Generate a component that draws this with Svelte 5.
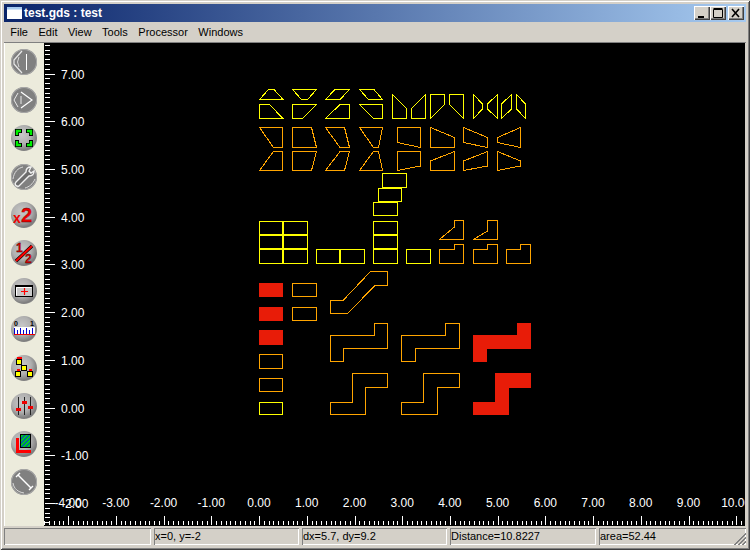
<script>
  const menus = ['File', 'Edit', 'View', 'Tools', 'Processor', 'Windows'];
  const icons = ['prev', 'next', 'fit', 'wrench', 'x2', 'half', 'box', 'ruler', 'nodes', 'sliders', 'layer', 'line'];
  const disabled = new Set(['prev', 'next', 'wrench', 'line']);

  const rect = (x1, y1, x2, y2) => `${x1},${y1} ${x2},${y1} ${x2},${y2} ${x1},${y2}`;

  const yellow = [
    '259.5,99.5 268.5,89.5 274,89.5 283,99.5',
    '259.5,104.5 269.5,104.5 283,118.5 259.5,118.5',
    '292.5,89.5 316.5,89.5 307.5,99.5 301.5,99.5',
    '292.5,104.5 316.5,104.5 302.5,118.5 292.5,118.5',
    '325.5,99.5 335,89.5 349.5,89.5 340,99.5',
    '325.5,118.5 340,104.5 349.5,104.5 349.5,118.5',
    '359.5,89.5 374,89.5 382.5,99.5 368.5,99.5',
    '359.5,104.5 382.5,104.5 382.5,118.5 373.5,118.5',
    '392.5,94.5 406.5,108.5 406.5,118.5 392.5,118.5',
    '411.5,108.5 425.5,94.5 425.5,118.5 411.5,118.5',
    '430.5,94.5 444.5,94.5 444.5,104.5 430.5,118.5',
    '449.5,94.5 463.5,94.5 463.5,118.5 449.5,104.5',
    '473.5,94.5 482.5,104 482.5,109 473.5,118.5',
    '497.5,94.5 497.5,118.5 487.5,109 487.5,104',
    '501.5,104 511.5,94.5 511.5,109 501.5,118.5',
    '516.5,94.5 525.5,104 525.5,118.5 516.5,109',
    rect(382.5, 173.5, 406.5, 187.5),
    rect(378.5, 188.5, 401.5, 201.5),
    rect(373.5, 202.5, 397.5, 215.5),
    rect(259.5, 221.5, 282.5, 234.5),
    rect(283.5, 221.5, 307.5, 234.5),
    rect(259.5, 235.5, 282.5, 248.5),
    rect(283.5, 235.5, 307.5, 248.5),
    rect(259.5, 249.5, 282.5, 263.5),
    rect(283.5, 249.5, 307.5, 263.5),
    rect(316.5, 249.5, 339.5, 263.5),
    rect(340.5, 249.5, 364.5, 263.5),
    rect(373.5, 221.5, 397.5, 234.5),
    rect(373.5, 235.5, 397.5, 248.5),
    rect(373.5, 249.5, 397.5, 263.5),
    rect(406.5, 249.5, 430.5, 263.5),
    rect(259.5, 402.5, 282.5, 414.5)
  ];

  const orange = [
    '259.5,127.5 282.5,127.5 282.5,147.5 273.5,147.5',
    '292.5,127.5 311.5,127.5 316.5,147.5 292.5,147.5',
    '325.5,127.5 344.5,127.5 349.5,147.5 340,147.5',
    '359.5,127.5 382.5,127.5 378.5,147.5 373.5,147.5',
    '397.5,127.5 420.5,127.5 420.5,147.5 397.5,142.5',
    '430.5,127.5 454.5,137.5 454.5,147.5 430.5,147.5',
    '463.5,127.5 487.5,137.5 487.5,147.5 463.5,142.5',
    '520.5,127.5 520.5,147.5 497.5,142.5 497.5,137.5',
    '259.5,170.5 273.5,151.5 282.5,151.5 282.5,170.5',
    '292.5,151.5 316.5,151.5 311.5,170.5 292.5,170.5',
    '325.5,170.5 340,151.5 349.5,151.5 344.5,170.5',
    '359.5,170.5 373.5,151.5 378.5,151.5 382.5,170.5',
    '397.5,151.5 420.5,151.5 420.5,166 397.5,170.5',
    '430.5,161 454.5,151.5 454.5,170.5 430.5,170.5',
    '463.5,161 487.5,151.5 487.5,166 463.5,170.5',
    '497.5,151.5 520.5,161 520.5,166 497.5,170.5',
    '439.5,239.5 454.5,227 454.5,220.5 463.5,220.5 463.5,239.5',
    '473.5,239.5 487.5,231 487.5,220.5 497.5,220.5 497.5,239.5',
    '439.5,249.5 454.5,249.5 454.5,244.5 463.5,244.5 463.5,263.5 439.5,263.5',
    '473.5,249.5 487.5,249.5 487.5,244.5 497.5,244.5 497.5,263.5 473.5,263.5',
    '506.5,249.5 520.5,249.5 520.5,244.5 530.5,244.5 530.5,263.5 506.5,263.5',
    rect(259.5, 354.5, 282.5, 368.5),
    rect(259.5, 378.5, 282.5, 391.5),
    rect(292.5, 283.5, 316.5, 296.5),
    rect(292.5, 307.5, 316.5, 320.5),
    '330.5,300.5 343,300.5 370.5,271.5 387.5,271.5 387.5,285.5 375,285.5 347.5,313.5 330.5,313.5',
    '330.5,335.5 374.5,335.5 374.5,323.5 387.5,323.5 387.5,348.5 343.5,348.5 343.5,361.5 330.5,361.5',
    '401.5,335.5 445.5,335.5 445.5,323.5 459.5,323.5 459.5,348.5 415.5,348.5 415.5,361.5 401.5,361.5',
    '330.5,402.5 352.5,402.5 352.5,373.5 387.5,373.5 387.5,387.5 365.5,387.5 365.5,414.5 330.5,414.5',
    '401.5,402.5 423.5,402.5 423.5,373.5 459.5,373.5 459.5,387.5 437.5,387.5 437.5,414.5 401.5,414.5'
  ];

  const red = [
    rect(259, 283, 283, 297),
    rect(259, 307, 283, 321),
    rect(259, 330, 283, 345),
    '473,335 517,335 517,323 531,323 531,349 487,349 487,362 473,362',
    '473,402 495,402 495,373 531,373 531,388 509,388 509,415 473,415'
  ];

  const X0 = 259.6, XS = 47.72, Y0 = 408.1, YS = 47.72;
  const xLabels = [-4, -3, -2, -1, 0, 1, 2, 3, 4, 5, 6, 7, 8, 9, 10];
  const yLabels = [7, 6, 5, 4, 3, 2, 1, 0, -1, -2];
  const yTicks = [];
  for (let i = -76; i <= 25; i++) {
    const y = Math.floor(Y0 + (i * YS) / 10) + 0.5;
    if (y > 44 && y < 526) yTicks.push({ y, major: i % 10 === 0 });
  }
  const xTicks = [];
  for (let i = -45; i <= 105; i++) {
    const x = Math.floor(X0 + (i * XS) / 10) + 0.5;
    if (x > 44 && x < 745) xTicks.push({ x, major: i % 10 === 0 });
  }
</script>

<div class="window">
  <header class="title">
    <svg class="appicon" viewBox="0 0 15 12" width="15" height="12"><rect width="15" height="12" fill="#fff" /><rect width="15" height="2.500" fill="#a6caf0" /></svg>
    <span class="caption">test.gds : test</span>
    <div class="controls">
      <button class="ctl" aria-label="Minimize"><svg viewBox="0 0 16 14" width="16" height="14"><rect x="4" y="10" width="6" height="2" fill="#000" /></svg></button>
      <button class="ctl" aria-label="Maximize"><svg viewBox="0 0 16 14" width="16" height="14"><path d="M3.500 3.500h9v8h-9z M3.500 2.500h9" fill="none" stroke="#000" /></svg></button>
      <button class="ctl close" aria-label="Close"><svg viewBox="0 0 16 14" width="16" height="14"><path d="M4 3l7 8M11 3l-7 8" stroke="#000" stroke-width="1.600" /></svg></button>
    </div>
  </header>

  <nav class="menu">
    {#each menus as m}<span class="item">{m}</span>{/each}
  </nav>

  <main class="body">
    <aside class="tools">
      {#each icons as ic}
        <div class="ball" class:off={disabled.has(ic)}>
          <svg viewBox="0 0 26 26" width="26" height="26">
            {#if ic === 'prev'}
              <path d="M15.500 5v16" stroke="#fff" stroke-width="1" fill="none" />
              <path d="M11 2 L3 11 L3 15 L11 24" stroke="#e8e8e8" stroke-width="1.200" fill="none" />
              <path d="M8 8 L6.500 13 L8 18" stroke="#d8d8d8" fill="none" />
            {:else if ic === 'next'}
              <path d="M10 5 L21 13 L10 21" stroke="#fff" stroke-width="1.200" fill="none" />
              <path d="M7 6 L3 13 L7 20 M10 9 L10 17" stroke="#e8e8e8" fill="none" />
            {:else if ic === 'fit'}
              <path d="M6 11V6h5M15 6h5v5M20 15v5h-5M11 20H6v-5" fill="none" stroke="#000" stroke-width="4" />
              <path d="M6 10V6h4M16 6h4v4M20 16v4h-4M10 20H6v-4" fill="none" stroke="#00f000" stroke-width="2.400" />
            {:else if ic === 'wrench'}
              <path d="M20 3c-3 0-5 2-5 5L5 18c-2 2 0 5 3 4l10-10c3 0 5-2 5-5l-3 2-2-2z" fill="#6c6c6c" stroke="#f0f0f0" stroke-width="1.400" />
              <path d="M2 15C3 8 7 4 12 3M14 24c4-1 8-4 10-9" fill="none" stroke="#ddd" />
            {:else if ic === 'x2'}
              <text class="t-x" x="2" y="21">x</text>
              <text class="t-2" x="10" y="20">2</text>
            {:else if ic === 'half'}
              <path d="M5 21L21 6" stroke="#000" stroke-width="3.400" />
              <path d="M5 21L21 6" stroke="#f00" stroke-width="2.200" />
              <text class="t-h" x="5" y="12">1</text>
              <text class="t-h" x="14" y="23">2</text>
            {:else if ic === 'box'}
              <rect x="4.500" y="7.500" width="17" height="11" fill="#c8c8c8" stroke="#000" />
              <path d="M5 8.500h16" stroke="#000" fill="none" />
              <path d="M5.500 9.500h15M5.500 9.500v8" stroke="#fff" fill="none" />
              <path d="M13.500 10v7M10 13.500h7" stroke="#f00" stroke-width="1.200" />
            {:else if ic === 'ruler'}
              <text class="t-r" x="3" y="10">0</text>
              <text class="t-r" x="19" y="10">1</text>
              <rect x="3" y="11" width="21" height="8" fill="#fff" />
              <path d="M3.500 12v6M6.500 14v4M9.500 12v6M12.500 14v4M15.500 12v6M18.500 14v4M21.500 12v6" stroke="#0000d0" />
              <path d="M3 18.500h21" stroke="#e00" />
            {:else if ic === 'nodes'}
              <path d="M8 7L13 13L7 19M13 13L19 19" stroke="#000" fill="none" />
              <rect x="6" y="2" width="5" height="3" fill="#f00" />
              <rect x="5.500" y="4.500" width="5" height="5" fill="#ff0" stroke="#000" />
              <rect x="10.500" y="10.500" width="5" height="5" fill="#ff0" stroke="#000" />
              <rect x="4.500" y="16.500" width="5" height="5" fill="#ff0" stroke="#000" />
              <rect x="16.500" y="16.500" width="5" height="5" fill="#ff0" stroke="#000" />
              <rect x="6" y="14" width="3" height="2" fill="#f00" />
              <rect x="18" y="14" width="3" height="2" fill="#f00" />
            {:else if ic === 'sliders'}
              <path d="M7.500 4v18M13.500 4v18M19.500 4v18" stroke="#222" />
              <rect x="5" y="15" width="5" height="3" fill="#e00" />
              <rect x="11" y="8" width="5" height="3" fill="#e00" />
              <rect x="17" y="13" width="5" height="3" fill="#e00" />
            {:else if ic === 'layer'}
              <defs>
                <pattern id="hatch" width="3" height="3" patternUnits="userSpaceOnUse" patternTransform="rotate(45)">
                  <rect width="3" height="3" fill="#00e000" /><rect width="1.300" height="3" fill="#0040d0" />
                </pattern>
              </defs>
              <path d="M5 7v15h15v-3H8V7z" fill="#f00" />
              <rect x="9.500" y="3.500" width="10" height="13" fill="url(#hatch)" stroke="#000" />
            {:else if ic === 'line'}
              <path d="M7 6L20 19" stroke="#fff" stroke-width="1.400" fill="none" />
              <path d="M5 8L9 4M18 21L22 17" stroke="#fff" stroke-width="1.400" />
              <path d="M2 14C3 20 7 23 13 24" stroke="#ddd" fill="none" />
            {/if}
          </svg>
        </div>
      {/each}
    </aside>

    <svg class="canvas" viewBox="44 43 701 483" width="701" height="483" shape-rendering="crispEdges">
      <rect x="44" y="43" width="701" height="483" fill="#000" />
      {#each yTicks as t}
        <line x1="45" x2={t.major ? 55 : 50} y1={t.y} y2={t.y} stroke="#fff" />
      {/each}
      {#each xTicks as t}
        <line x1={t.x} x2={t.x} y1={t.major ? 516 : 521} y2="525" stroke="#fff" />
      {/each}
      {#each xLabels as v}
        <text class="lab" x={X0 + v * XS - 0.6} y="507" text-anchor="middle">{v.toFixed(2)}</text>
      {/each}
      {#each yLabels as v}
        <text class="lab" x="61" y={Y0 - v * YS + 4.5}>{v.toFixed(2)}</text>
      {/each}
      {#each yellow as p}<polygon points={p} fill="none" stroke="#ffff00" />{/each}
      {#each orange as p}<polygon points={p} fill="none" stroke="#ffa500" />{/each}
      {#each red as p}<polygon points={p} fill="#e81c08" />{/each}
    </svg>
  </main>

  <footer class="status">
    <div class="panel p1"></div>
    <div class="panel p2">x=0, y=-2</div>
    <div class="panel p3">dx=5.7, dy=9.2</div>
    <div class="panel p4">Distance=10.8227</div>
    <div class="panel p5">
      area=52.44
      <svg class="grip" viewBox="0 0 13 13" width="13" height="13">
        <path d="M13 1L1 13M13 2L2 13M13 5L5 13M13 6L6 13M13 9L9 13M13 10L10 13" stroke="#808080" fill="none" />
      </svg>
    </div>
  </footer>
</div>

<style>
  :global(body) { margin: 0; background: #d4d0c8; }
  .window {
    width: 750px;
    height: 550px;
    box-sizing: border-box;
    padding: 4px;
    background: #d4d0c8;
    box-shadow: inset 1px 1px 0 #d4d0c8, inset -1px -1px 0 #404040, inset 2px 2px 0 #fff, inset -2px -2px 0 #808080;
    font-family: "Liberation Sans", sans-serif;
    font-size: 11px;
    color: #000;
    display: flex;
    flex-direction: column;
    overflow: hidden;
  }
  .title {
    height: 18px;
    flex: none;
    display: flex;
    align-items: center;
    padding-left: 3px;
    background: linear-gradient(90deg, #0a246a, #a6caf0);
    color: #fff;
  }
  .appicon { margin-right: 2px; }
  .caption { font: bold 12px "Liberation Sans", sans-serif; }
  .controls { margin-left: auto; display: flex; padding-right: 2px; }
  .ctl {
    width: 16px;
    height: 14px;
    padding: 0;
    border: none;
    background: #d4d0c8;
    display: block;
    box-shadow: inset 1px 1px 0 #fff, inset -1px -1px 0 #404040, inset -2px -2px 0 #808080;
  }
  .ctl svg { display: block; }
  .close { margin-left: 2px; }
  .menu {
    height: 20px;
    flex: none;
    display: flex;
    align-items: center;
    padding-left: 1px;
    border-bottom: 1px solid #808080;
  }
  .item { padding: 0 5.250px; line-height: 20px; }
  .body { flex: none; height: 483px; display: flex; }
  .tools {
    width: 40px;
    flex: none;
    background: #ecebdc;
    display: flex;
    flex-direction: column;
    align-items: center;
    gap: 12.200px;
    padding-top: 6px;
    box-sizing: border-box;
    box-shadow: inset 1px 0 0 #fff;
  }
  .ball {
    width: 26px;
    height: 26px;
    flex: none;
    border-radius: 50%;
    margin-left: -1px;
    background:
      radial-gradient(circle at 42% 38%, #c8c8c8 0%, #b0b0b0 42%, #7c7c7c 70%, #9a9a9a 80%, transparent 96%),
      linear-gradient(180deg, #e8e8e8, #fff);
  }
  .ball svg { display: block; }
  .ball.off { background: #808080; box-shadow: inset 0 0 0 1px #a8a8a8; }
  .canvas { display: block; flex: none; }
  .lab { font: 12px "Liberation Sans", sans-serif; fill: #fff; shape-rendering: auto; }
  .t-x { font: bold 14px "Liberation Sans", sans-serif; fill: #e00; }
  .t-2 { font: bold 20px "Liberation Sans", sans-serif; fill: #e00; stroke: #600; stroke-width: 0.3; }
  .t-h { font: bold 12px "Liberation Sans", sans-serif; fill: #e00; stroke: #000; stroke-width: 0.3; }
  .t-r { font: bold 7px "Liberation Sans", sans-serif; fill: #000; }
  .status { height: 20px; flex: none; display: flex; padding-top: 2px; box-sizing: border-box; gap: 3px; }
  .panel {
    height: 17px;
    line-height: 17px;
    box-sizing: border-box;
    padding-left: 1px;
    box-shadow: inset 1px 1px 0 #808080, inset -1px -1px 0 #fff;
    white-space: nowrap;
    position: relative;
    flex: none;
  }
  .p1 { width: 147px; }
  .p2 { width: 145px; }
  .p3 { width: 145px; }
  .p4 { width: 146px; }
  .p5 { width: 147px; }
  .grip { position: absolute; right: 0; bottom: 0; }
</style>
